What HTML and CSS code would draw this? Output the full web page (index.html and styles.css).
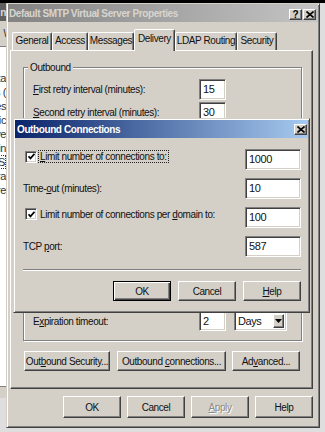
FILE: index.html
```html
<!DOCTYPE html>
<html lang="en">
<head>
    <meta charset="UTF-8">
    <meta name="viewport" content="width=device-width, initial-scale=1.0">
    <title>Default SMTP Virtual Server Properties</title>
    <link rel="stylesheet" href="styles.css">
</head>
<body>
    <div class="desktop">
        <div class="bgwin">
            <div class="bg-title"><span>n</span></div>
            <div class="bg-tool"><span class="bg-slash">\</span></div>
            <div class="bg-body">
                <div class="bg-line"><span>Data</span></div>
                <div class="bg-line"><span>Items (</span></div>
                <div class="bg-line"><span>Sites</span></div>
                <div class="bg-line"><span>Basic</span></div>
                <div class="bg-line"><span>Active</span></div>
                <div class="bg-line"><span>Domain</span></div>
                <div class="bg-line bg-sel"><span>SMTPS</span></div>
                <div class="bg-line"><span>Extra</span></div>
                <div class="bg-line"><span>Store</span></div>
            </div>
            <div class="bg-foot"></div>
        </div>

        <div class="window">
            <div class="titlebar inactive">
                <span class="title">Default SMTP Virtual Server Properties</span>
                <div class="caption-btns">
                    <span class="cap-btn">?</span>
                    <span class="cap-btn">
                        <svg width="8" height="7" viewBox="0 0 8 7"><path d="M0.5 0.5l7 6M7.5 0.5l-7 6" stroke="#000" stroke-width="1.6"/></svg>
                    </span>
                </div>
            </div>

            <div class="win-body">
                <div class="tabs">
                    <div class="tab tab-general">General</div>
                    <div class="tab tab-access">Access</div>
                    <div class="tab tab-messages">Messages</div>
                    <div class="tab tab-delivery active">Delivery</div>
                    <div class="tab tab-ldap">LDAP Routing</div>
                    <div class="tab tab-security">Security</div>
                </div>

                <div class="panel">
                    <fieldset class="group">
                        <legend>Outbound</legend>
                        <div class="group-body">
                            <div class="row">
                                <label><u>F</u>irst retry interval (minutes):</label>
                                <span class="field num">15</span>
                            </div>
                            <div class="row">
                                <label><u>S</u>econd retry interval (minutes):</label>
                                <span class="field num">30</span>
                            </div>
                            <div class="row">
                                <label><u>T</u>hird retry interval (minutes):</label>
                                <span class="field num">60</span>
                            </div>
                            <div class="row">
                                <label>S<u>u</u>bsequent retry interval (minutes):</label>
                                <span class="field num">240</span>
                            </div>
                            <div class="row row-push">
                                <label><u>D</u>elay notification:</label>
                                <span class="field num">12</span>
                                <span class="field select">Hours<span class="drop"><svg width="7" height="4" viewBox="0 0 7 4"><path d="M0 0h7l-3.5 4z" fill="#000"/></svg></span></span>
                            </div>
                            <div class="row row-short">
                                <label>E<u>x</u>piration timeout:</label>
                                <span class="field num">2</span>
                                <span class="field select">Days<span class="drop"><svg width="7" height="4" viewBox="0 0 7 4"><path d="M0 0h7l-3.5 4z" fill="#000"/></svg></span></span>
                            </div>
                        </div>
                    </fieldset>

                    <div class="panel-buttons">
                        <button class="btn btn-security">Out<u>b</u>ound Security...</button>
                        <button class="btn btn-connections">Outbound <u>c</u>onnections...</button>
                        <button class="btn btn-advanced">Ad<u>v</u>anced...</button>
                    </div>
                </div>

                <div class="dlg-buttons">
                    <button class="btn btn-main">OK</button>
                    <button class="btn btn-main">Cancel</button>
                    <button class="btn btn-main disabled"><u>A</u>pply</button>
                    <button class="btn btn-main">Help</button>
                </div>
            </div>

            <div class="dialog">
                <div class="titlebar active-title">
                    <span class="title">Outbound Connections</span>
                    <span class="cap-btn">
                        <svg width="8" height="7" viewBox="0 0 8 7"><path d="M0.5 0.5l7 6M7.5 0.5l-7 6" stroke="#000" stroke-width="1.6"/></svg>
                    </span>
                </div>
                <div class="dialog-body">
                    <div class="dlg-rows">
                        <div class="dlg-row">
                            <div class="check-label">
                                <span class="check"><svg width="7" height="7" viewBox="0 0 7 7"><path d="M0.5 3.2l2 2.2 4-4.6" stroke="#000" stroke-width="1.7" fill="none"/></svg></span>
                                <span class="focus"><u>L</u>imit number of connections to:</span>
                            </div>
                            <span class="field wide">1000</span>
                        </div>
                        <div class="dlg-row">
                            <label>Time-<u>o</u>ut (minutes):</label>
                            <span class="field wide">10</span>
                        </div>
                        <div class="dlg-row">
                            <div class="check-label">
                                <span class="check"><svg width="7" height="7" viewBox="0 0 7 7"><path d="M0.5 3.2l2 2.2 4-4.6" stroke="#000" stroke-width="1.7" fill="none"/></svg></span>
                                <span class="plain">Limit number of connections per <u>d</u>omain to:</span>
                            </div>
                            <span class="field wide">100</span>
                        </div>
                        <div class="dlg-row">
                            <label>TCP <u>p</u>ort:</label>
                            <span class="field wide">587</span>
                        </div>
                    </div>
                    <div class="separator"></div>
                    <div class="dialog-buttons">
                        <button class="btn btn-dlg default">OK</button>
                        <button class="btn btn-dlg">Cancel</button>
                        <button class="btn btn-dlg"><u>H</u>elp</button>
                    </div>
                </div>
            </div>
        </div>
    </div>
</body>
</html>
```

FILE: styles.css
```css
* {
    box-sizing: border-box;
}
body {
    margin: 0;
    font-family: "Liberation Sans", Arial, sans-serif;
    font-size: 10px;
    color: #111;
    letter-spacing: -0.4px;
    white-space: nowrap;
}
u {
    text-decoration-thickness: 1px;
    text-underline-offset: 1px;
}
.desktop {
    display: flex;
    width: 325px;
    height: 432px;
    overflow: hidden;
    background: linear-gradient(#000 3px, #dedede 3px);
}

/* window behind, only a sliver shows */
.bgwin {
    width: 6px;
    flex: none;
    height: 395px;
    margin-top: 3px;
    display: flex;
    flex-direction: column;
    background: #fff;
    overflow: hidden;
}
.bg-title {
    height: 18px;
    background: #5f5f5f;
    color: #ddd;
    display: flex;
    justify-content: flex-end;
    align-items: center;
    font-weight: bold;
}
.bg-tool {
    height: 26px;
    background: #d4d0c8;
    display: flex;
    justify-content: flex-end;
    align-items: center;
    border-bottom: 1px solid #808080;
}
.bg-body {
    flex: 1;
    padding-top: 24px;
}
.bg-line {
    display: flex;
    justify-content: flex-end;
    height: 14px;
    line-height: 14px;
    font-size: 11px;
    color: #333;
}
.bg-sel span {
    border: 1px dotted #333;
    line-height: 12px;
}
.bg-foot {
    height: 12px;
    background: #d4d0c8;
    border-top: 1px solid #808080;
}

/* main property sheet */
.window {
    position: relative;
    flex: none;
    width: 314px;
    height: 425px;
    margin-top: 3px;
    padding: 0 1px 1px;
    background: #d4d0c8;
    border: 1px solid;
    border-color: #d4d0c8 #404040 #404040 #d4d0c8;
    box-shadow: inset 1px 1px #fff, inset -1px -1px #808080;
}
.titlebar {
    height: 18px;
    display: flex;
    align-items: center;
    justify-content: space-between;
    padding: 0 2px 0 1px;
    font-weight: bold;
}
.titlebar.inactive {
    background: linear-gradient(90deg, #838383, #c4c4c4);
    color: #d8d5cf;
}
.titlebar.active-title {
    background: linear-gradient(90deg, #0a246a, #a6caf0);
    color: #fff;
}
.caption-btns {
    display: flex;
    gap: 1px;
    margin-top: 3px;
}
.cap-btn {
    width: 13px;
    height: 11px;
    display: flex;
    align-items: center;
    justify-content: center;
    background: #d4d0c8;
    color: #000;
    font-size: 10px;
    letter-spacing: 0;
    border: 1px solid;
    border-color: #fff #404040 #404040 #fff;
    box-shadow: inset -1px -1px #808080;
}
.win-body {
    padding: 0 5px 0 2px;
}

/* tabs */
.tabs {
    display: flex;
    align-items: flex-end;
    height: 28px;
    padding-left: 2px;
}
.tab {
    height: 18px;
    line-height: 16px;
    text-align: center;
    border-top: 1px solid #fff;
    border-left: 1px solid #fff;
    border-right: 1px solid #404040;
    box-shadow: inset -1px 0 #808080;
    border-radius: 2px 2px 0 0;
    background: #d4d0c8;
}
.tab.active {
    height: 22px;
    margin-bottom: -1px;
    line-height: 18px;
    position: relative;
    z-index: 1;
}
.tab-general { width: 40px; }
.tab-access { width: 36px; }
.tab-messages { width: 46px; }
.tab-delivery { width: 41px; }
.tab-ldap { width: 62px; }
.tab-security { width: 40px; }

.panel {
    height: 339px;
    padding: 11px 10px 0 12px;
    border: 1px solid;
    border-color: #fff #404040 #404040 #fff;
    box-shadow: inset -1px -1px #808080;
}
.group {
    margin: 0;
    padding: 6px 8px 9px 9px;
    border: 1px solid #808080;
    box-shadow: inset 1px 1px #fff, 1px 1px #fff;
}
.group legend {
    padding: 0 2px;
    margin-left: -5px;
    background: #d4d0c8;
}
.group-body {
    height: 252px;
    display: flex;
    flex-direction: column;
    gap: 2px;
}
.row {
    display: flex;
    align-items: center;
    height: 21px;
}
.row label {
    width: 166px;
    flex: none;
}
.row-push {
    margin-top: auto;
}
.row-short {
    height: 20px;
}
.field {
    height: 100%;
    background: #fff;
    padding: 1px 3px 0;
    line-height: 17px;
    font-size: 11px;
    border: 1px solid;
    border-color: #808080 #fff #fff #808080;
    box-shadow: inset 1px 1px #404040, inset -1px -1px #d4d0c8;
}
.num {
    width: 27px;
}
.select {
    width: 53px;
    margin-left: 8px;
    display: flex;
    justify-content: space-between;
    padding-right: 2px;
}
.drop {
    width: 11px;
    height: 14px;
    margin-top: 1px;
    display: flex;
    align-items: center;
    justify-content: center;
    background: #d4d0c8;
    border: 1px solid;
    border-color: #fff #404040 #404040 #fff;
    box-shadow: inset -1px -1px #808080;
}

/* buttons */
.btn {
    font: inherit;
    color: #111;
    letter-spacing: -0.4px;
    white-space: nowrap;
    background: #d4d0c8;
    padding: 0;
    border: 1px solid;
    border-color: #fff #404040 #404040 #fff;
    box-shadow: inset -1px -1px #808080;
}
.btn.disabled {
    color: #8a8a8a;
    text-shadow: 1px 1px #fff;
}
.btn.default {
    border-color: #000;
    box-shadow: inset 1px 1px #fff, inset -1px -1px #404040, inset -2px -2px #808080;
}
.panel-buttons {
    display: flex;
    margin: 10px 0 0 1px;
}
.btn-security { width: 86px; height: 20px; }
.btn-connections { width: 109px; height: 20px; margin-left: 7px; }
.btn-advanced { width: 68px; height: 20px; margin-left: 6px; }

.dlg-buttons {
    display: flex;
    justify-content: flex-end;
    gap: 6px;
    margin-top: 7px;
}
.btn-main {
    width: 58px;
    height: 22px;
}

/* Outbound Connections dialog on top */
.dialog {
    position: absolute;
    left: 6px;
    top: 114px;
    width: 297px;
    height: 195px;
    padding: 1px;
    background: #d4d0c8;
    border: 1px solid;
    border-color: #d4d0c8 #404040 #404040 #d4d0c8;
    box-shadow: inset 1px 1px #fff, inset -1px -1px #808080;
}
.dialog .titlebar {
    padding: 0 1px 0 2px;
}
.dialog-body {
    padding: 11px 7px 0 8px;
}
.dlg-rows {
    display: flex;
    flex-direction: column;
    gap: 8px;
}
.dlg-row {
    display: flex;
    align-items: center;
    justify-content: space-between;
    height: 21px;
}
.dlg-row .check-label {
    align-self: flex-start;
    margin-top: 1px;
    display: flex;
    align-items: center;
}
.check {
    width: 12px;
    height: 12px;
    margin: 0 1px 0 2px;
    display: flex;
    align-items: center;
    justify-content: center;
    background: #fff;
    border: 1px solid;
    border-color: #808080 #fff #fff #808080;
    box-shadow: inset 1px 1px #404040, inset -1px -1px #d4d0c8;
}
.focus {
    border: 1px dotted #222;
    padding: 0 1px;
}
.plain {
    padding: 0 2px;
}
.wide {
    width: 56px;
}
.separator {
    margin-top: 12px;
    height: 2px;
    border-top: 1px solid #808080;
    border-bottom: 1px solid #fff;
}
.dialog-buttons {
    display: flex;
    justify-content: flex-end;
    gap: 7px;
    margin-top: 10px;
}
.btn-dlg {
    width: 58px;
    height: 20px;
}
```
